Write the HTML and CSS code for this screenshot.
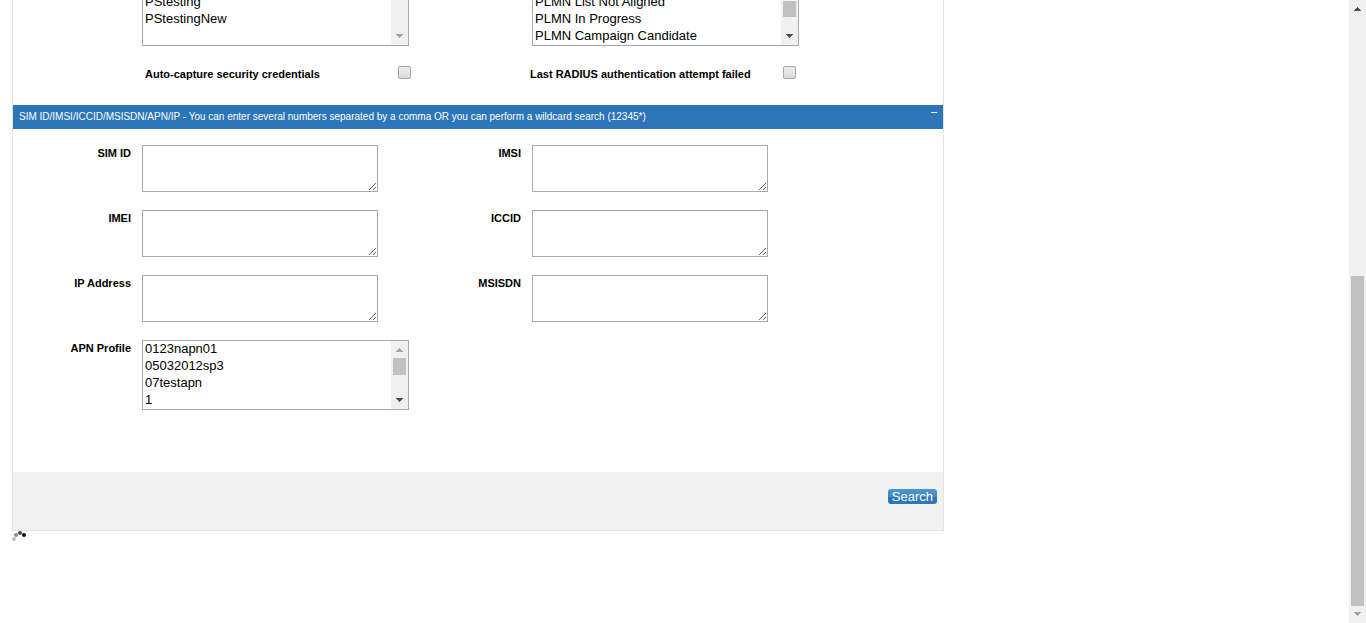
FILE: index.html
```html
<!DOCTYPE html>
<html lang="en">
<head>
<meta charset="utf-8">
<title>SIM Search</title>
<link rel="stylesheet" href="styles.css">
</head>
<body>
<div class="shell">
  <main class="content">
    <form class="panel">
      <div class="fields fields-top">
        <div class="field field-cut">
          <div class="listbox">
            <select class="list" multiple size="3" aria-label="Profile set">
              <option>PStesting</option>
              <option>PStestingNew</option>
            </select>
            <div class="track">
              <svg class="arrow arrow-off arrow-end" viewBox="0 0 7 4"><path d="M0 0h7v1h-1v1h-1v1h-1v1h-1v-1h-1v-1h-1v-1h-1z"/></svg>
            </div>
          </div>
        </div>
        <div class="field field-cut">
          <div class="listbox">
            <select class="list" multiple size="3" aria-label="PLMN status">
              <option>PLMN List Not Aligned</option>
              <option>PLMN In Progress</option>
              <option>PLMN Campaign Candidate</option>
            </select>
            <div class="track">
              <div class="thumb thumb-mid"></div>
              <svg class="arrow arrow-end" viewBox="0 0 7 4"><path d="M0 0h7v1h-1v1h-1v1h-1v1h-1v-1h-1v-1h-1v-1h-1z"/></svg>
            </div>
          </div>
        </div>
      </div>

      <div class="checks">
        <div class="check">
          <label for="auto">Auto-capture security credentials</label>
          <input class="tick" id="auto" type="checkbox">
        </div>
        <div class="check">
          <label for="radius">Last RADIUS authentication attempt failed</label>
          <input class="tick" id="radius" type="checkbox">
        </div>
      </div>

      <div class="bar">
        <span>SIM ID/IMSI/ICCID/MSISDN/APN/IP - You can enter several numbers separated by a comma OR you can perform a wildcard search (12345*)</span>
        <button class="fold" type="button" aria-label="Collapse"></button>
      </div>

      <div class="fields fields-main">
        <div class="field"><label class="name" for="sim">SIM ID</label><textarea class="box" id="sim"></textarea></div>
        <div class="field"><label class="name" for="imsi">IMSI</label><textarea class="box" id="imsi"></textarea></div>
        <div class="field"><label class="name" for="imei">IMEI</label><textarea class="box" id="imei"></textarea></div>
        <div class="field"><label class="name" for="iccid">ICCID</label><textarea class="box" id="iccid"></textarea></div>
        <div class="field"><label class="name" for="ip">IP Address</label><textarea class="box" id="ip"></textarea></div>
        <div class="field"><label class="name" for="msisdn">MSISDN</label><textarea class="box" id="msisdn"></textarea></div>
        <div class="field">
          <label class="name" for="apn">APN Profile</label>
          <div class="listbox">
            <select class="list" id="apn" multiple size="4">
              <option>0123napn01</option>
              <option>05032012sp3</option>
              <option>07testapn</option>
              <option>1</option>
            </select>
            <div class="track">
              <svg class="arrow arrow-off" viewBox="0 0 7 4"><path d="M0 4h7v-1h-1v-1h-1v-1h-1v-1h-1v1h-1v1h-1v1h-1z"/></svg>
              <div class="thumb thumb-top"></div>
              <svg class="arrow arrow-end" viewBox="0 0 7 4"><path d="M0 0h7v1h-1v1h-1v1h-1v1h-1v-1h-1v-1h-1v-1h-1z"/></svg>
            </div>
          </div>
        </div>
      </div>

      <div class="actions">
        <button class="search" type="submit">Search</button>
      </div>
    </form>
    <svg class="spinner" width="16" height="12" viewBox="0 0 16 12">
      <circle cx="2" cy="8" r="2" fill="#bdbdbd"/>
      <circle cx="4" cy="4" r="2" fill="#8a8a8a"/>
      <circle cx="8" cy="2" r="2" fill="#4a4a4a"/>
      <circle cx="12" cy="4" r="2" fill="#111"/>
    </svg>
  </main>
  <div class="track page-track">
    <svg class="arrow" viewBox="0 0 7 4"><path d="M0 4h7v-1h-1v-1h-1v-1h-1v-1h-1v1h-1v1h-1v1h-1z"/></svg>
    <div class="page-run"><div class="thumb page-thumb"></div></div>
    <svg class="arrow arrow-off arrow-end" viewBox="0 0 7 4"><path d="M0 0h7v1h-1v1h-1v1h-1v1h-1v-1h-1v-1h-1v-1h-1z"/></svg>
  </div>
</div>
</body>
</html>
```

FILE: styles.css
```css
* { box-sizing: border-box; }

body {
  margin: 0;
  background: #fff;
  color: #000;
  font-family: "Liberation Sans", Arial, sans-serif;
  font-size: 11px;
}

.shell { display: flex; height: 100vh; }

.content {
  flex: 1;
  min-width: 0;
  padding: 0 12px;
  overflow: hidden;
}

.panel {
  max-width: 932px;
  border: 1px solid #e3e3e3;
  border-top: 0;
}

.fields {
  display: grid;
  grid-template-columns: 390px 1fr;
  row-gap: 18px;
}

.fields-main { padding: 16px 0 62px; }

.field { display: flex; align-items: flex-start; }

/* lists partly scrolled out above the window */
.fields-top { overflow: hidden; }
.field-cut {
  height: 46px;
  padding-left: 129px;
  align-items: flex-end;
}

.name {
  flex: none;
  width: 118px;
  margin-right: 11px;
  line-height: 17px;
  font-weight: bold;
  text-align: right;
}

.box {
  display: block;
  width: 236px;
  height: 47px;
  margin: 0;
  padding: 2px;
  border: 1px solid #a9a9a9;
  background: #fff;
  font: 13px "Liberation Sans", Arial, sans-serif;
  resize: both;
}

.listbox {
  display: flex;
  flex: none;
  width: 267px;
  border: 1px solid #a9a9a9;
}

.list {
  flex: 1;
  min-width: 0;
  margin: 0;
  padding: 0;
  border: 0;
  border-radius: 0;
  background: #fff;
  color: #000;
  font: 13px "Liberation Sans", Arial, sans-serif;
  overflow: hidden;
  scrollbar-width: none;
}

.list option {
  height: 17px;
  min-height: 17px;
  padding: 0 2px;
  line-height: 15px;
}

.track {
  display: flex;
  flex: none;
  flex-direction: column;
  align-items: center;
  width: 17px;
  padding: 7px 0;
  background: #f0f0f0;
}

.arrow { flex: none; width: 7px; height: 4px; fill: #505050; }
.arrow-off { fill: #a3a3a3; }
.arrow-end { margin-top: auto; }

.thumb { width: 13px; background: #c1c1c1; }
.thumb-top { height: 17px; margin-top: 6px; }
.thumb-mid { height: 16px; }

.page-run {
  flex: 1;
  display: flex;
  flex-direction: column;
  justify-content: flex-end;
  padding: 6px 0;
}
.page-thumb { height: 56%; }

.checks {
  display: grid;
  grid-template-columns: 385px 1fr;
  padding: 20px 0 24px 132px;
}

.check {
  display: flex;
  justify-content: space-between;
  width: 266px;
  line-height: 13px;
  font-weight: bold;
}
.check label { padding-top: 2px; }

.tick {
  appearance: none;
  width: 13px;
  height: 13px;
  margin: 0;
  border: 1px solid #a6a6a6;
  border-radius: 2px;
  background: linear-gradient(#eee, #dcdcdc);
}

.bar {
  display: flex;
  justify-content: space-between;
  padding: 0 6px;
  background: #2b75b8;
  color: #fff;
  font-size: 10px;
  line-height: 24px;
}

.fold {
  width: 6px;
  height: 8px;
  padding: 0;
  border: 0;
  border-bottom: 1px solid #fff;
  background: none;
}

.actions {
  display: flex;
  justify-content: flex-end;
  padding: 17px 6px 26px;
  background: #f1f1f1;
}

.search {
  padding: 0 4px;
  border: 0;
  border-radius: 3px;
  background: linear-gradient(#4c97cd, #3f8bc5 50%, #2b75b5 50%, #3079b8);
  color: #fff;
  font: 13px/15px "Liberation Sans", Arial, sans-serif;
}

.spinner { display: block; }
```
